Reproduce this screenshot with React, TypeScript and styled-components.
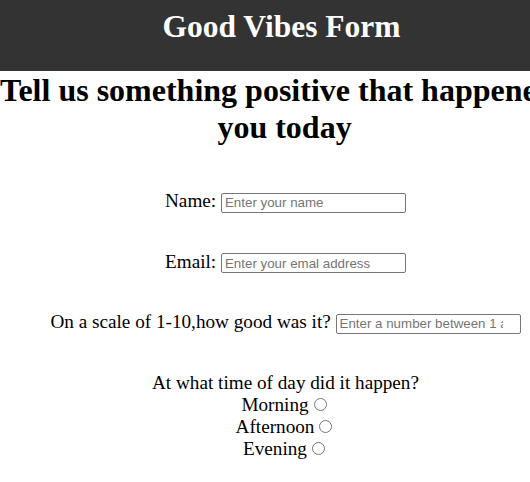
import React from "react";
import styled, { createGlobalStyle } from "styled-components";

const GlobalStyle = createGlobalStyle`
  html, body {
    margin: 0;
    padding: 0;
    overflow-x: hidden;
    background: #ffffff;
  }
  body {
    font-family: "Liberation Serif", "Times New Roman", serif;
    color: #000000;
  }
`;

const Page = styled.div`
  width: 563px;
`;

const Header = styled.header`
  box-sizing: border-box;
  height: 71px;
  padding-top: 9px;
  background: #333333;
  text-align: center;
`;

const Title = styled.h1`
  margin: 0;
  font-size: 31.5px;
  font-weight: bold;
  color: #ffffff;
`;

const Heading = styled.h1`
  margin: 0;
  padding-top: 1px;
  padding-left: 6px;
  font-size: 32px;
  font-weight: bold;
  text-align: center;
`;

const NoWrap = styled.span`
  white-space: nowrap;
  margin-left: -6px;
`;

const Form = styled.form`
  display: flex;
  flex-direction: column;
  gap: 38px;
  margin-top: 44px;
  padding-left: 8px;
  font-size: 19.2px;
`;

const Field = styled.div`
  text-align: center;
`;

const TextInput = styled.input<{ $padRight?: number }>`
  box-sizing: border-box;
  width: 185px;
  height: 20px;
  padding: 1px ${(p) => p.$padRight ?? 3}px 1px 3px;
  border: 1px solid #767676;
  border-radius: 2px;
  font-family: "Liberation Sans", Arial, sans-serif;
  font-size: 13.33px;
  color: #000;
  background: #fff;
  &::placeholder {
    color: #757575;
  }
  &::-webkit-inner-spin-button,
  &::-webkit-outer-spin-button {
    -webkit-appearance: none;
    margin: 0;
  }
`;

const OptionLine = styled.div`
  text-align: center;
`;

const Radio = styled.input`
  margin: 3px 3px 0 5px;
  width: 13px;
  height: 13px;
`;

const times = ["Morning", "Afternoon", "Evening"];

export default function App() {
  return (
    <Page>
      <GlobalStyle />
      <Header>
        <Title>Good Vibes Form</Title>
      </Header>
      <Heading>
        <NoWrap>Tell us something positive that happened to</NoWrap> you today
      </Heading>
      <Form onSubmit={(e) => e.preventDefault()}>
        <Field>
          <label>
            Name: <TextInput type="text" placeholder="Enter your name" />
          </label>
        </Field>
        <Field>
          <label>
            Email: <TextInput type="email" placeholder="Enter your emal address" />
          </label>
        </Field>
        <Field>
          <label>
            On a scale of 1-10,how good was it?{" "}
            <TextInput
              type="number"
              $padRight={17}
              placeholder="Enter a number between 1 and 10"
            />
          </label>
        </Field>
        <Field>
          <OptionLine>At what time of day did it happen?</OptionLine>
          {times.map((t) => (
            <OptionLine key={t}>
              <label>
                {t}
                <Radio type="radio" name="time" value={t.toLowerCase()} />
              </label>
            </OptionLine>
          ))}
        </Field>
      </Form>
    </Page>
  );
}
